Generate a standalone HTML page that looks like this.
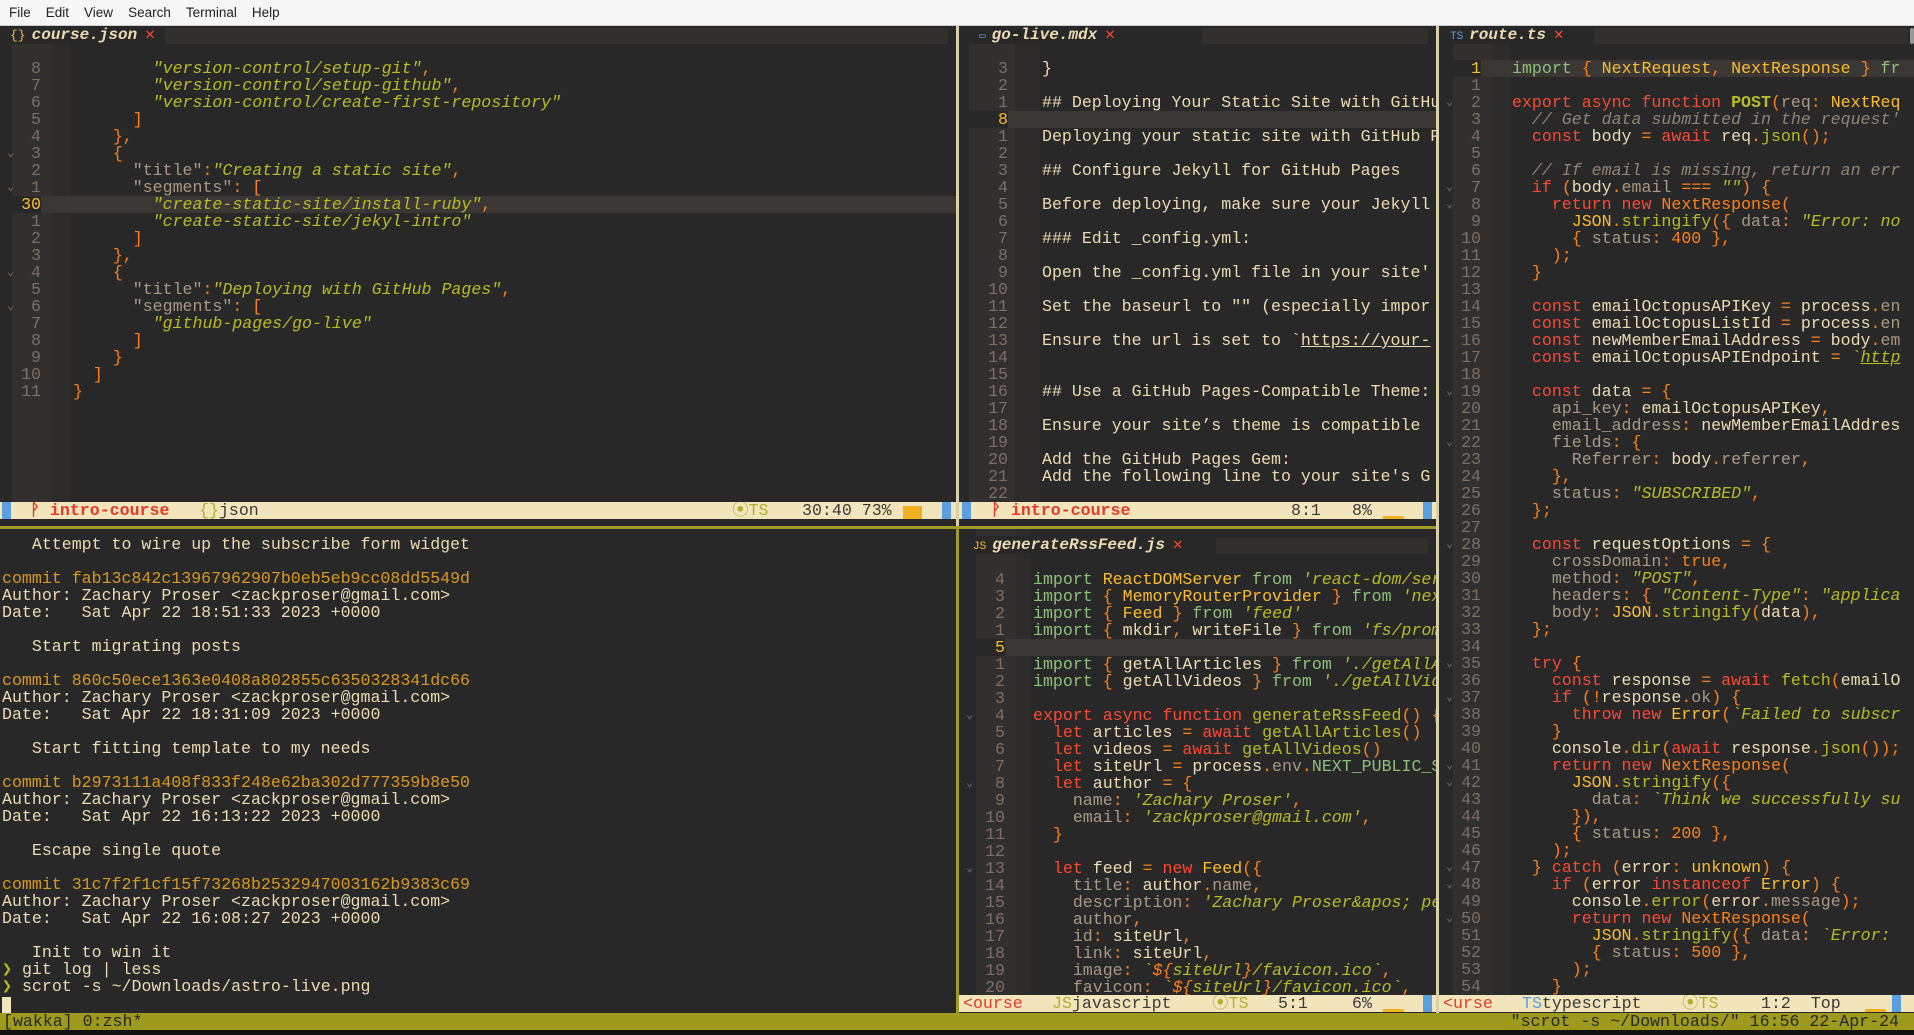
<!DOCTYPE html>
<html><head><meta charset="utf-8">
<style>
*{margin:0;padding:0;box-sizing:border-box}
body{width:1914px;height:1035px;overflow:hidden;background:#282828;font-family:"Liberation Mono",monospace;font-size:16.6px;color:#ebdbb2;position:relative}
.abs{position:absolute}
#menu{left:0;top:0;width:1914px;height:26px;background:#f6f6f6;border-bottom:1px solid #ccc;font-family:"Liberation Sans",sans-serif;font-size:13.5px;color:#222;line-height:26px}
#menu span{margin-left:9px;margin-right:6px}
.pane{position:absolute;overflow:hidden}
.tabbar{position:absolute;left:0;top:0;right:0;height:18px;background:#282828}
.tabbar .rest{position:absolute;top:2px;bottom:0;right:8px;background:#32302f}
.tab{position:absolute;top:0;height:18px;line-height:18px;white-space:nowrap;font-weight:bold;font-style:italic;font-size:16px}
.tab .ic{font-style:normal;font-weight:normal;font-size:11px;margin-right:6px}
.tab .x{color:#fb4934;font-style:normal;font-weight:normal;margin-left:8px}
.rows{position:absolute;left:0;right:0}
.r{height:17px;line-height:17px;white-space:pre;position:relative}
.r .n{position:absolute;left:0;text-align:right;color:#7c6f64}
.r .fd{position:absolute;left:7px;color:#7c6f64;font-size:12px}
.r.cur{background:#3a3735}
.r.cur .n{color:#fabd2f;background:#282828}
.k{color:#fb4934}.o{color:#fe8019}.y{color:#fabd2f}.g{color:#b8bb26;font-style:italic}.a{color:#8ec07c}.c{color:#928374;font-style:italic}.p{color:#a89984}.b{color:#b8bb26}
.u{text-decoration:underline}
.st{position:absolute;height:17px;line-height:17px;background:#f2e5bc;color:#3c3836;white-space:pre;overflow:hidden}
.st>span{position:absolute;top:0}
.blu{position:absolute;top:0;width:9px;height:17px;background:#5a9fe0}
.red{color:#e53a2a}
.ts{color:#b0b030}
.ob{position:absolute;background:#f0b020}
</style></head><body>
<div id="menu" class="abs"><span>File</span><span>Edit</span><span>View</span><span>Search</span><span>Terminal</span><span>Help</span></div>

<!-- Pane A: course.json -->
<div class="pane" style="left:0;top:26px;width:956px;height:476px;background:linear-gradient(to right,#282828 0 12px,#32302f 12px 52px,#2e2c2b 52px 71px,#282828 71px)">
 <div class="tabbar"><div class="rest" style="left:165px"></div>
  <div class="tab" style="left:10px"><span class="ic y" style="font-size:13px">{}</span>course.json<span class="x">✕</span></div></div>
 <div class="rows" style="top:34px">
<div class="r" style="padding-left:73px"><span class="n" style="width:41px">8</span>        <span class="g">"version-control/setup-git"</span><span class="o">,</span></div>
<div class="r" style="padding-left:73px"><span class="n" style="width:41px">7</span>        <span class="g">"version-control/setup-github"</span><span class="o">,</span></div>
<div class="r" style="padding-left:73px"><span class="n" style="width:41px">6</span>        <span class="g">"version-control/create-first-repository"</span></div>
<div class="r" style="padding-left:73px"><span class="n" style="width:41px">5</span>      <span class="o">]</span></div>
<div class="r" style="padding-left:73px"><span class="n" style="width:41px">4</span>    <span class="o">},</span></div>
<div class="r" style="padding-left:73px"><span class="fd">⌄</span><span class="n" style="width:41px">3</span>    <span class="o">{</span></div>
<div class="r" style="padding-left:73px"><span class="n" style="width:41px">2</span>      <span class="p">"title"</span><span class="o">:</span><span class="g">"Creating a static site"</span><span class="o">,</span></div>
<div class="r" style="padding-left:73px"><span class="fd">⌄</span><span class="n" style="width:41px">1</span>      <span class="p">"segments"</span><span class="o">: [</span></div>
<div class="r cur" style="padding-left:73px"><span class="n" style="width:41px;padding-right:0">30</span>        <span class="g">"create-static-site/install-ruby"</span><span class="o">,</span></div>
<div class="r" style="padding-left:73px"><span class="n" style="width:41px">1</span>        <span class="g">"create-static-site/jekyl-intro"</span></div>
<div class="r" style="padding-left:73px"><span class="n" style="width:41px">2</span>      <span class="o">]</span></div>
<div class="r" style="padding-left:73px"><span class="n" style="width:41px">3</span>    <span class="o">},</span></div>
<div class="r" style="padding-left:73px"><span class="fd">⌄</span><span class="n" style="width:41px">4</span>    <span class="o">{</span></div>
<div class="r" style="padding-left:73px"><span class="n" style="width:41px">5</span>      <span class="p">"title"</span><span class="o">:</span><span class="g">"Deploying with GitHub Pages"</span><span class="o">,</span></div>
<div class="r" style="padding-left:73px"><span class="fd">⌄</span><span class="n" style="width:41px">6</span>      <span class="p">"segments"</span><span class="o">: [</span></div>
<div class="r" style="padding-left:73px"><span class="n" style="width:41px">7</span>        <span class="g">"github-pages/go-live"</span></div>
<div class="r" style="padding-left:73px"><span class="n" style="width:41px">8</span>      <span class="o">]</span></div>
<div class="r" style="padding-left:73px"><span class="n" style="width:41px">9</span>    <span class="o">}</span></div>
<div class="r" style="padding-left:73px"><span class="n" style="width:41px">10</span>  <span class="o">]</span></div>
<div class="r" style="padding-left:73px"><span class="n" style="width:41px">11</span><span class="o">}</span></div>
 </div>
</div>
<div class="st" style="left:0;top:502px;width:956px"><div class="blu" style="left:2px"></div><span class="red" style="left:30px;font-weight:bold">ᚹ intro-course</span><span style="left:199px"><span class="ts">{}</span>json</span><span class="ts" style="left:732px">⦿TS</span><span style="left:802px">30:40 73%</span><div class="ob" style="left:903px;top:4px;width:19px;height:13px"></div><div class="blu" style="left:942px"></div></div>

<!-- dividers -->
<div class="abs" style="left:956px;top:26px;width:3px;height:501px;background:#d9cfa8"></div>
<div class="abs" style="left:1436px;top:26px;width:3px;height:987px;background:#d9cfa8"></div>
<div class="abs" style="left:0;top:526px;width:1436px;height:3px;background:#a09a2a"></div>
<div class="abs" style="left:956px;top:527px;width:3px;height:486px;background:#a09a2a"></div>

<!-- Pane B: go-live.mdx -->
<div class="pane" style="left:959px;top:26px;width:477px;height:476px;background:linear-gradient(to right,#282828 0 10px,#32302f 10px 56px,#2e2c2b 56px 81px,#282828 81px)">
 <div class="tabbar"><div class="rest" style="left:243px"></div>
  <div class="tab" style="left:20px"><span class="ic" style="color:#5a9fe0">▭</span>go-live.mdx<span class="x">✕</span></div></div>
 <div class="rows" style="top:34px">
<div class="r" style="padding-left:83px"><span class="n" style="width:49px">3</span>}</div>
<div class="r" style="padding-left:83px"><span class="n" style="width:49px">2</span></div>
<div class="r" style="padding-left:83px"><span class="n" style="width:49px">1</span>## Deploying Your Static Site with GitHub Pages</div>
<div class="r cur" style="padding-left:83px"><span class="n" style="width:49px">8</span></div>
<div class="r" style="padding-left:83px"><span class="n" style="width:49px">1</span>Deploying your static site with GitHub Pages</div>
<div class="r" style="padding-left:83px"><span class="n" style="width:49px">2</span></div>
<div class="r" style="padding-left:83px"><span class="n" style="width:49px">3</span>## Configure Jekyll for GitHub Pages</div>
<div class="r" style="padding-left:83px"><span class="n" style="width:49px">4</span></div>
<div class="r" style="padding-left:83px"><span class="n" style="width:49px">5</span>Before deploying, make sure your Jekyll site</div>
<div class="r" style="padding-left:83px"><span class="n" style="width:49px">6</span></div>
<div class="r" style="padding-left:83px"><span class="n" style="width:49px">7</span>### Edit _config.yml:</div>
<div class="r" style="padding-left:83px"><span class="n" style="width:49px">8</span></div>
<div class="r" style="padding-left:83px"><span class="n" style="width:49px">9</span>Open the _config.yml file in your site'</div>
<div class="r" style="padding-left:83px"><span class="n" style="width:49px">10</span></div>
<div class="r" style="padding-left:83px"><span class="n" style="width:49px">11</span>Set the baseurl to "" (especially impor</div>
<div class="r" style="padding-left:83px"><span class="n" style="width:49px">12</span></div>
<div class="r" style="padding-left:83px"><span class="n" style="width:49px">13</span>Ensure the url is set to `<span class="u">https://your-</span></div>
<div class="r" style="padding-left:83px"><span class="n" style="width:49px">14</span></div>
<div class="r" style="padding-left:83px"><span class="n" style="width:49px">15</span></div>
<div class="r" style="padding-left:83px"><span class="n" style="width:49px">16</span>## Use a GitHub Pages-Compatible Theme:</div>
<div class="r" style="padding-left:83px"><span class="n" style="width:49px">17</span></div>
<div class="r" style="padding-left:83px"><span class="n" style="width:49px">18</span>Ensure your site’s theme is compatible</div>
<div class="r" style="padding-left:83px"><span class="n" style="width:49px">19</span></div>
<div class="r" style="padding-left:83px"><span class="n" style="width:49px">20</span>Add the GitHub Pages Gem:</div>
<div class="r" style="padding-left:83px"><span class="n" style="width:49px">21</span>Add the following line to your site's G</div>
<div class="r" style="padding-left:83px"><span class="n" style="width:49px">22</span></div>
 </div>
</div>
<div class="st" style="left:959px;top:502px;width:477px"><div class="blu" style="left:3px"></div><span class="red" style="left:32px;font-weight:bold">ᚹ intro-course</span><span style="left:332px">8:1</span><span style="left:393px">8%</span><div class="ob" style="left:424px;top:14px;width:21px;height:3px"></div><div class="blu" style="left:464px"></div></div>

<!-- Terminal -->
<div class="pane" style="left:0;top:529px;width:956px;height:484px">
 <div class="rows" style="top:7px;padding-left:2px">
<div class="r">   Attempt to wire up the subscribe form widget</div>
<div class="r"></div>
<div class="r" style="color:#d79921">commit fab13c842c13967962907b0eb5eb9cc08dd5549d</div>
<div class="r">Author: Zachary Proser &lt;zackproser@gmail.com&gt;</div>
<div class="r">Date:   Sat Apr 22 18:51:33 2023 +0000</div>
<div class="r"></div>
<div class="r">   Start migrating posts</div>
<div class="r"></div>
<div class="r" style="color:#d79921">commit 860c50ece1363e0408a802855c6350328341dc66</div>
<div class="r">Author: Zachary Proser &lt;zackproser@gmail.com&gt;</div>
<div class="r">Date:   Sat Apr 22 18:31:09 2023 +0000</div>
<div class="r"></div>
<div class="r">   Start fitting template to my needs</div>
<div class="r"></div>
<div class="r" style="color:#d79921">commit b2973111a408f833f248e62ba302d777359b8e50</div>
<div class="r">Author: Zachary Proser &lt;zackproser@gmail.com&gt;</div>
<div class="r">Date:   Sat Apr 22 16:13:22 2023 +0000</div>
<div class="r"></div>
<div class="r">   Escape single quote</div>
<div class="r"></div>
<div class="r" style="color:#d79921">commit 31c7f2f1cf15f73268b2532947003162b9383c69</div>
<div class="r">Author: Zachary Proser &lt;zackproser@gmail.com&gt;</div>
<div class="r">Date:   Sat Apr 22 16:08:27 2023 +0000</div>
<div class="r"></div>
<div class="r">   Init to win it</div>
<div class="r"><span class="b">❯</span> git log | less</div>
<div class="r"><span class="b">❯</span> scrot -s ~/Downloads/astro-live.png</div>
 </div>
 <div class="abs" style="left:2px;top:468px;width:9px;height:16px;background:#f2e5bc"></div>
</div>

<!-- Pane C: generateRssFeed.js -->
<div class="pane" style="left:959px;top:529px;width:477px;height:466px;background:linear-gradient(to right,#282828 0 17px,#32302f 17px 57px,#2e2c2b 57px 72px,#282828 72px)">
 <div class="tabbar" style="top:7px"><div class="rest" style="left:257px"></div>
  <div class="tab" style="left:14px"><span class="ic y">JS</span>generateRssFeed.js<span class="x">✕</span></div></div>
 <div class="rows" style="top:42px">
<div class="r" style="padding-left:74px"><span class="n" style="width:46px">4</span><span class="a">import</span> <span class="y">ReactDOMServer</span> <span class="a">from</span> <span class="g">'react-dom/server'</span></div>
<div class="r" style="padding-left:74px"><span class="n" style="width:46px">3</span><span class="a">import</span> <span class="o">{</span> <span class="y">MemoryRouterProvider</span> <span class="o">}</span> <span class="a">from</span> <span class="g">'next-router-mock'</span></div>
<div class="r" style="padding-left:74px"><span class="n" style="width:46px">2</span><span class="a">import</span> <span class="o">{</span> <span class="y">Feed</span> <span class="o">}</span> <span class="a">from</span> <span class="g">'feed'</span></div>
<div class="r" style="padding-left:74px"><span class="n" style="width:46px">1</span><span class="a">import</span> <span class="o">{</span> mkdir<span class="o">,</span> writeFile <span class="o">}</span> <span class="a">from</span> <span class="g">'fs/promises'</span></div>
<div class="r cur" style="padding-left:74px"><span class="n" style="width:46px">5</span></div>
<div class="r" style="padding-left:74px"><span class="n" style="width:46px">1</span><span class="a">import</span> <span class="o">{</span> getAllArticles <span class="o">}</span> <span class="a">from</span> <span class="g">'./getAllArticles'</span></div>
<div class="r" style="padding-left:74px"><span class="n" style="width:46px">2</span><span class="a">import</span> <span class="o">{</span> getAllVideos <span class="o">}</span> <span class="a">from</span> <span class="g">'./getAllVideos'</span></div>
<div class="r" style="padding-left:74px"><span class="n" style="width:46px">3</span></div>
<div class="r" style="padding-left:74px"><span class="fd">⌄</span><span class="n" style="width:46px">4</span><span class="k">export async function</span> <span class="b">generateRssFeed</span><span class="o">()</span> <span class="o">{</span></div>
<div class="r" style="padding-left:74px"><span class="n" style="width:46px">5</span>  <span class="k">let</span> articles <span class="o">=</span> <span class="k">await</span> <span class="b">getAllArticles</span><span class="o">()</span></div>
<div class="r" style="padding-left:74px"><span class="n" style="width:46px">6</span>  <span class="k">let</span> videos <span class="o">=</span> <span class="k">await</span> <span class="b">getAllVideos</span><span class="o">()</span></div>
<div class="r" style="padding-left:74px"><span class="n" style="width:46px">7</span>  <span class="k">let</span> siteUrl <span class="o">=</span> process<span class="o">.</span><span class="p">env</span><span class="o">.</span><span class="a">NEXT_PUBLIC_SITE_URL</span></div>
<div class="r" style="padding-left:74px"><span class="fd">⌄</span><span class="n" style="width:46px">8</span>  <span class="k">let</span> author <span class="o">= {</span></div>
<div class="r" style="padding-left:74px"><span class="n" style="width:46px">9</span>    <span class="p">name</span><span class="o">:</span> <span class="g">'Zachary Proser'</span><span class="o">,</span></div>
<div class="r" style="padding-left:74px"><span class="n" style="width:46px">10</span>    <span class="p">email</span><span class="o">:</span> <span class="g">'zackproser@gmail.com'</span><span class="o">,</span></div>
<div class="r" style="padding-left:74px"><span class="n" style="width:46px">11</span>  <span class="o">}</span></div>
<div class="r" style="padding-left:74px"><span class="n" style="width:46px">12</span></div>
<div class="r" style="padding-left:74px"><span class="fd">⌄</span><span class="n" style="width:46px">13</span>  <span class="k">let</span> feed <span class="o">=</span> <span class="k">new</span> <span class="y">Feed</span><span class="o">({</span></div>
<div class="r" style="padding-left:74px"><span class="n" style="width:46px">14</span>    <span class="p">title</span><span class="o">:</span> author<span class="o">.</span><span class="p">name</span><span class="o">,</span></div>
<div class="r" style="padding-left:74px"><span class="n" style="width:46px">15</span>    <span class="p">description</span><span class="o">:</span> <span class="g">'Zachary Proser&amp;apos; personal'</span></div>
<div class="r" style="padding-left:74px"><span class="n" style="width:46px">16</span>    <span class="p">author</span><span class="o">,</span></div>
<div class="r" style="padding-left:74px"><span class="n" style="width:46px">17</span>    <span class="p">id</span><span class="o">:</span> siteUrl<span class="o">,</span></div>
<div class="r" style="padding-left:74px"><span class="n" style="width:46px">18</span>    <span class="p">link</span><span class="o">:</span> siteUrl<span class="o">,</span></div>
<div class="r" style="padding-left:74px"><span class="n" style="width:46px">19</span>    <span class="p">image</span><span class="o">:</span> <span class="g">`<span class="o">${</span>siteUrl<span class="o">}</span>/favicon.ico`</span><span class="o">,</span></div>
<div class="r" style="padding-left:74px"><span class="n" style="width:46px">20</span>    <span class="p">favicon</span><span class="o">:</span> <span class="g">`<span class="o">${</span>siteUrl<span class="o">}</span>/favicon.ico`</span><span class="o">,</span></div>
 </div>
</div>
<div class="st" style="left:959px;top:995px;width:477px;background:#f2e5bc"><span class="red" style="left:4px">&lt;ourse</span><span style="left:93px"><span class="ts">JS</span>javascript</span><span class="ts" style="left:253px">⦿TS</span><span style="left:319px">5:1</span><span style="left:393px">6%</span><div class="ob" style="left:424px;top:14px;width:21px;height:3px"></div><div class="blu" style="left:464px"></div></div>

<!-- Pane D: route.ts -->
<div class="pane" style="left:1439px;top:26px;width:475px;height:969px;background:linear-gradient(to right,#282828 0 14px,#32302f 14px 53px,#2e2c2b 53px 71px,#282828 71px)">
 <div class="tabbar"><div class="rest" style="left:155px;right:6px"></div>
  <div class="tab" style="left:11px"><span class="ic" style="color:#5a9fe0">TS</span>route.ts<span class="x">✕</span></div>
  <div class="abs" style="right:0;top:2px;width:4px;height:16px;background:#999;border-radius:2px"></div></div>
 <div class="rows" style="top:34px">
<div class="r cur" style="padding-left:73px"><span class="n" style="width:42px">1</span><span class="a">import</span> <span class="o">{</span> <span class="y">NextRequest</span><span class="o">,</span> <span class="y">NextResponse</span> <span class="o">}</span> <span class="a">fr</span></div>
<div class="r" style="padding-left:73px"><span class="n" style="width:42px">1</span></div>
<div class="r" style="padding-left:73px"><span class="fd">⌄</span><span class="n" style="width:42px">2</span><span class="k">export async function</span> <span class="b" style="font-weight:bold">POST</span><span class="o">(</span><span class="p">req</span><span class="o">:</span> <span class="y">NextReq</span></div>
<div class="r" style="padding-left:73px"><span class="n" style="width:42px">3</span>  <span class="c">// Get data submitted in the request'</span></div>
<div class="r" style="padding-left:73px"><span class="n" style="width:42px">4</span>  <span class="k">const</span> body <span class="o">=</span> <span class="k">await</span> req<span class="o">.</span><span class="b">json</span><span class="o">();</span></div>
<div class="r" style="padding-left:73px"><span class="n" style="width:42px">5</span></div>
<div class="r" style="padding-left:73px"><span class="n" style="width:42px">6</span>  <span class="c">// If email is missing, return an err</span></div>
<div class="r" style="padding-left:73px"><span class="fd">⌄</span><span class="n" style="width:42px">7</span>  <span class="k">if</span> <span class="o">(</span>body<span class="o">.</span><span class="p">email</span> <span class="o">===</span> <span class="g">""</span><span class="o">) {</span></div>
<div class="r" style="padding-left:73px"><span class="fd">⌄</span><span class="n" style="width:42px">8</span>    <span class="k">return new</span> <span class="o">NextResponse(</span></div>
<div class="r" style="padding-left:73px"><span class="n" style="width:42px">9</span>      <span class="y">JSON</span><span class="o">.</span><span class="b">stringify</span><span class="o">({</span> <span class="p">data</span><span class="o">:</span> <span class="g">"Error: no</span></div>
<div class="r" style="padding-left:73px"><span class="n" style="width:42px">10</span>      <span class="o">{</span> <span class="p">status</span><span class="o">:</span> <span class="o">400</span> <span class="o">},</span></div>
<div class="r" style="padding-left:73px"><span class="n" style="width:42px">11</span>    <span class="o">);</span></div>
<div class="r" style="padding-left:73px"><span class="n" style="width:42px">12</span>  <span class="o">}</span></div>
<div class="r" style="padding-left:73px"><span class="n" style="width:42px">13</span></div>
<div class="r" style="padding-left:73px"><span class="n" style="width:42px">14</span>  <span class="k">const</span> emailOctopusAPIKey <span class="o">=</span> process<span class="o">.</span><span class="p">en</span></div>
<div class="r" style="padding-left:73px"><span class="n" style="width:42px">15</span>  <span class="k">const</span> emailOctopusListId <span class="o">=</span> process<span class="o">.</span><span class="p">en</span></div>
<div class="r" style="padding-left:73px"><span class="n" style="width:42px">16</span>  <span class="k">const</span> newMemberEmailAddress <span class="o">=</span> body<span class="o">.</span><span class="p">em</span></div>
<div class="r" style="padding-left:73px"><span class="n" style="width:42px">17</span>  <span class="k">const</span> emailOctopusAPIEndpoint <span class="o">=</span> <span class="g">`<span class="u">http</span></span></div>
<div class="r" style="padding-left:73px"><span class="n" style="width:42px">18</span></div>
<div class="r" style="padding-left:73px"><span class="fd">⌄</span><span class="n" style="width:42px">19</span>  <span class="k">const</span> data <span class="o">= {</span></div>
<div class="r" style="padding-left:73px"><span class="n" style="width:42px">20</span>    <span class="p">api_key</span><span class="o">:</span> emailOctopusAPIKey<span class="o">,</span></div>
<div class="r" style="padding-left:73px"><span class="n" style="width:42px">21</span>    <span class="p">email_address</span><span class="o">:</span> newMemberEmailAddres</div>
<div class="r" style="padding-left:73px"><span class="fd">⌄</span><span class="n" style="width:42px">22</span>    <span class="p">fields</span><span class="o">: {</span></div>
<div class="r" style="padding-left:73px"><span class="n" style="width:42px">23</span>      <span class="p">Referrer</span><span class="o">:</span> body<span class="o">.</span><span class="p">referrer</span><span class="o">,</span></div>
<div class="r" style="padding-left:73px"><span class="n" style="width:42px">24</span>    <span class="o">},</span></div>
<div class="r" style="padding-left:73px"><span class="n" style="width:42px">25</span>    <span class="p">status</span><span class="o">:</span> <span class="g">"SUBSCRIBED"</span><span class="o">,</span></div>
<div class="r" style="padding-left:73px"><span class="n" style="width:42px">26</span>  <span class="o">};</span></div>
<div class="r" style="padding-left:73px"><span class="n" style="width:42px">27</span></div>
<div class="r" style="padding-left:73px"><span class="fd">⌄</span><span class="n" style="width:42px">28</span>  <span class="k">const</span> requestOptions <span class="o">= {</span></div>
<div class="r" style="padding-left:73px"><span class="n" style="width:42px">29</span>    <span class="p">crossDomain</span><span class="o">:</span> <span class="o">true,</span></div>
<div class="r" style="padding-left:73px"><span class="n" style="width:42px">30</span>    <span class="p">method</span><span class="o">:</span> <span class="g">"POST"</span><span class="o">,</span></div>
<div class="r" style="padding-left:73px"><span class="n" style="width:42px">31</span>    <span class="p">headers</span><span class="o">: {</span> <span class="g">"Content-Type"</span><span class="o">:</span> <span class="g">"applica</span></div>
<div class="r" style="padding-left:73px"><span class="n" style="width:42px">32</span>    <span class="p">body</span><span class="o">:</span> <span class="y">JSON</span><span class="o">.</span><span class="b">stringify</span><span class="o">(</span>data<span class="o">),</span></div>
<div class="r" style="padding-left:73px"><span class="n" style="width:42px">33</span>  <span class="o">};</span></div>
<div class="r" style="padding-left:73px"><span class="n" style="width:42px">34</span></div>
<div class="r" style="padding-left:73px"><span class="fd">⌄</span><span class="n" style="width:42px">35</span>  <span class="k">try</span> <span class="o">{</span></div>
<div class="r" style="padding-left:73px"><span class="n" style="width:42px">36</span>    <span class="k">const</span> response <span class="o">=</span> <span class="k">await</span> <span class="b">fetch</span><span class="o">(</span>emailO</div>
<div class="r" style="padding-left:73px"><span class="fd">⌄</span><span class="n" style="width:42px">37</span>    <span class="k">if</span> <span class="o">(!</span>response<span class="o">.</span><span class="p">ok</span><span class="o">) {</span></div>
<div class="r" style="padding-left:73px"><span class="n" style="width:42px">38</span>      <span class="k">throw new</span> <span class="y">Error</span><span class="o">(</span><span class="g">`Failed to subscr</span></div>
<div class="r" style="padding-left:73px"><span class="n" style="width:42px">39</span>    <span class="o">}</span></div>
<div class="r" style="padding-left:73px"><span class="n" style="width:42px">40</span>    console<span class="o">.</span><span class="b">dir</span><span class="o">(</span><span class="k">await</span> response<span class="o">.</span><span class="b">json</span><span class="o">());</span></div>
<div class="r" style="padding-left:73px"><span class="fd">⌄</span><span class="n" style="width:42px">41</span>    <span class="k">return new</span> <span class="o">NextResponse(</span></div>
<div class="r" style="padding-left:73px"><span class="fd">⌄</span><span class="n" style="width:42px">42</span>      <span class="y">JSON</span><span class="o">.</span><span class="b">stringify</span><span class="o">({</span></div>
<div class="r" style="padding-left:73px"><span class="n" style="width:42px">43</span>        <span class="p">data</span><span class="o">:</span> <span class="g">`Think we successfully su</span></div>
<div class="r" style="padding-left:73px"><span class="n" style="width:42px">44</span>      <span class="o">}),</span></div>
<div class="r" style="padding-left:73px"><span class="n" style="width:42px">45</span>      <span class="o">{</span> <span class="p">status</span><span class="o">:</span> <span class="o">200</span> <span class="o">},</span></div>
<div class="r" style="padding-left:73px"><span class="n" style="width:42px">46</span>    <span class="o">);</span></div>
<div class="r" style="padding-left:73px"><span class="fd">⌄</span><span class="n" style="width:42px">47</span>  <span class="o">}</span> <span class="k">catch</span> <span class="o">(</span>error<span class="o">:</span> <span class="y">unknown</span><span class="o">) {</span></div>
<div class="r" style="padding-left:73px"><span class="fd">⌄</span><span class="n" style="width:42px">48</span>    <span class="k">if</span> <span class="o">(</span>error <span class="k">instanceof</span> <span class="y">Error</span><span class="o">) {</span></div>
<div class="r" style="padding-left:73px"><span class="n" style="width:42px">49</span>      console<span class="o">.</span><span class="b">error</span><span class="o">(</span>error<span class="o">.</span><span class="p">message</span><span class="o">);</span></div>
<div class="r" style="padding-left:73px"><span class="fd">⌄</span><span class="n" style="width:42px">50</span>      <span class="k">return new</span> <span class="o">NextResponse(</span></div>
<div class="r" style="padding-left:73px"><span class="n" style="width:42px">51</span>        <span class="y">JSON</span><span class="o">.</span><span class="b">stringify</span><span class="o">({</span> <span class="p">data</span><span class="o">:</span> <span class="g">`Error:</span></div>
<div class="r" style="padding-left:73px"><span class="n" style="width:42px">52</span>        <span class="o">{</span> <span class="p">status</span><span class="o">:</span> <span class="o">500</span> <span class="o">},</span></div>
<div class="r" style="padding-left:73px"><span class="n" style="width:42px">53</span>      <span class="o">);</span></div>
<div class="r" style="padding-left:73px"><span class="n" style="width:42px">54</span>    <span class="o">}</span></div>
 </div>
</div>
<div class="st" style="left:1439px;top:995px;width:475px"><span class="red" style="left:4px">&lt;urse</span><span style="left:83px"><span style="color:#5a9fe0">TS</span>typescript</span><span class="ts" style="left:243px">⦿TS</span><span style="left:322px">1:2  Top</span><div class="ob" style="left:426px;top:14px;width:21px;height:3px"></div><div class="blu" style="left:453px"></div></div>

<!-- tmux bar -->
<div class="abs" style="left:0;top:1013px;width:1914px;height:17px;background:#9d9a1e;color:#282828;line-height:17px;white-space:pre"><span style="position:absolute;left:3px">[wakka] 0:zsh*</span><span style="position:absolute;right:15px">"scrot -s ~/Downloads/" 16:56 22-Apr-24</span></div>
<div class="abs" style="left:0;top:1030px;width:1914px;height:5px;background:#111"></div>
</body></html>
